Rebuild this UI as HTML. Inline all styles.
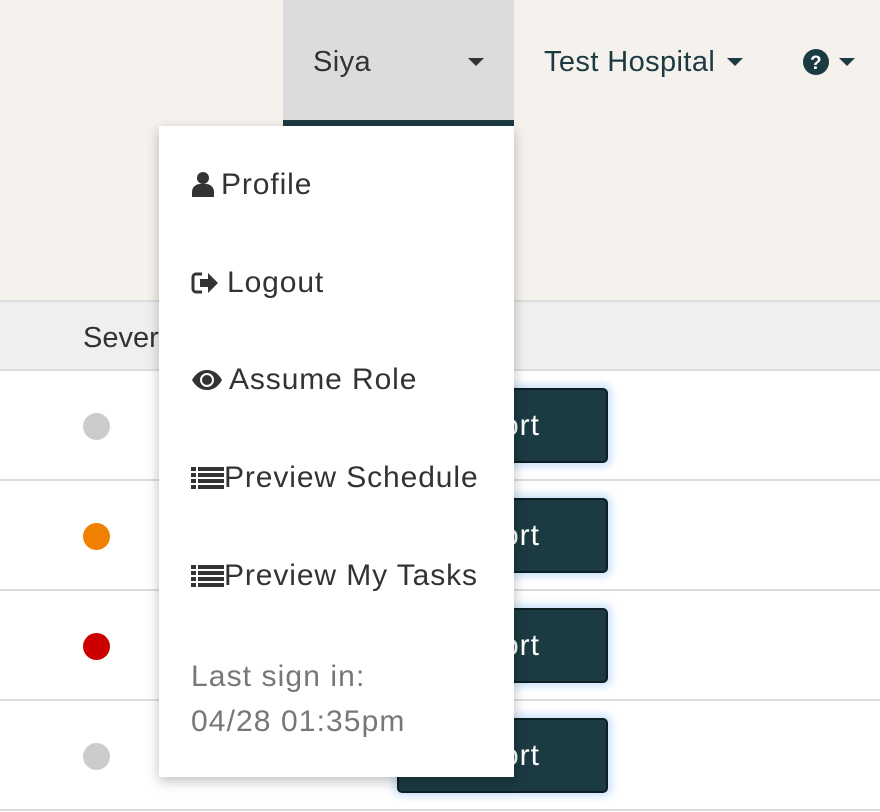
<!DOCTYPE html>
<html><head><meta charset="utf-8"><style>
*{margin:0;padding:0;box-sizing:border-box}
body{width:880px;height:812px;overflow:hidden;background:#fff;font-family:"Liberation Sans","DejaVu Sans",sans-serif;position:relative}
.top{position:absolute;left:0;top:0;width:880px;height:300px;background:#f5f2ee}
.nav{position:absolute;top:0;height:126px;font-size:29px;letter-spacing:0.4px;color:#1b3a41;line-height:124px}
.siya{left:283px;width:231px;background:#dcdcdc;border-bottom:6px solid #1b3a41;color:#333;padding-left:30px}
.caret{position:absolute;width:0;height:0;border-left:8px solid transparent;border-right:8px solid transparent;border-top:8px solid #333;top:58px}
.th{position:absolute;left:0;top:300px;width:880px;height:71px;background:#efefef;border-top:2px solid #ddd;border-bottom:2px solid #ddd;font-size:29px;color:#333;padding-left:83px;line-height:72px}
.row{position:absolute;left:0;width:880px;height:110px;border-bottom:2px solid #ddd}
.dot{position:absolute;left:83px;width:27px;height:27px;border-radius:50%}
.btn{position:absolute;left:397px;width:211px;height:75px;background:#1b3a41;border:2px solid #0d1f23;border-radius:5px;box-shadow:0 0 8px 4px #cde3fb;color:#fff;font-size:30px;letter-spacing:1px;line-height:72px;padding-left:103px}
.menu{position:absolute;left:159px;top:126px;width:355px;height:651px;background:#fff;box-shadow:0 4px 12px rgba(0,0,0,.25);font-size:30px;letter-spacing:0.9px;color:#333}
.it{position:absolute;left:32px;display:flex;align-items:center;gap:6px}
.last{position:absolute;left:32px;top:528px;color:#777;font-size:30px;letter-spacing:1.1px;line-height:45px}
</style></head><body>
<div class="top"></div>
<div class="nav siya">Siya<span class="caret" style="left:185px"></span></div>
<div class="nav" style="left:544px;width:210px">Test Hospital<span class="caret" style="left:183px;border-top-color:#1b3a41"></span></div>
<div class="nav" style="left:803px;width:60px">
<svg style="position:absolute;left:0;top:49px" width="26" height="26" viewBox="0 0 26 26"><circle cx="13" cy="13" r="13" fill="#1b3a41"/><text x="13" y="20" text-anchor="middle" font-size="19" font-weight="bold" fill="#fff" font-family="Liberation Sans">?</text></svg>
<span class="caret" style="left:36px;border-top-color:#1b3a41"></span></div>
<div class="th">Severity</div>
<div class="row" style="top:371px"><div class="dot" style="top:42px;background:#ccc"></div><div class="btn" style="top:17px">ort</div></div>
<div class="row" style="top:481px"><div class="dot" style="top:42px;background:#f08000"></div><div class="btn" style="top:17px">ort</div></div>
<div class="row" style="top:591px"><div class="dot" style="top:42px;background:#cc0000"></div><div class="btn" style="top:17px">ort</div></div>
<div class="row" style="top:701px"><div class="dot" style="top:42px;background:#ccc"></div><div class="btn" style="top:17px">ort</div></div>
<div class="menu">
<div class="it" style="top:42px"><svg width="24" height="28" viewBox="0 0 24 28"><circle cx="12" cy="7" r="6" fill="#333"/><path d="M1 26v-5c0-5 4-8 8-8h6c4 0 8 3 8 8v5z" fill="#333"/></svg>Profile</div>
<div class="it" style="top:140px"><svg width="30" height="24" viewBox="0 0 30 24"><path d="M11 3H5a3 3 0 0 0-3 3v12a3 3 0 0 0 3 3h6" fill="none" stroke="#333" stroke-width="3"/><path d="M9 8h8V2l10 10-10 10v-6H9z" fill="#333"/></svg>Logout</div>
<div class="it" style="top:237px"><svg width="32" height="22" viewBox="0 0 32 22"><path d="M1 11C5 4 10 1 16 1s11 3 15 10c-4 7-9 10-15 10S5 18 1 11z" fill="#333"/><circle cx="16" cy="11" r="7" fill="#fff"/><circle cx="16" cy="11" r="5" fill="#333"/></svg>Assume Role</div>
<div class="it" style="top:335px;gap:0"><svg width="33" height="24" viewBox="0 0 33 24"><g fill="#333"><rect x="0" y="1" width="5" height="4"/><rect x="7" y="1" width="26" height="4"/><rect x="0" y="7" width="5" height="4"/><rect x="7" y="7" width="26" height="4"/><rect x="0" y="13" width="5" height="4"/><rect x="7" y="13" width="26" height="4"/><rect x="0" y="19" width="5" height="4"/><rect x="7" y="19" width="26" height="4"/></g></svg>Preview Schedule</div>
<div class="it" style="top:433px;gap:0"><svg width="33" height="24" viewBox="0 0 33 24"><g fill="#333"><rect x="0" y="1" width="5" height="4"/><rect x="7" y="1" width="26" height="4"/><rect x="0" y="7" width="5" height="4"/><rect x="7" y="7" width="26" height="4"/><rect x="0" y="13" width="5" height="4"/><rect x="7" y="13" width="26" height="4"/><rect x="0" y="19" width="5" height="4"/><rect x="7" y="19" width="26" height="4"/></g></svg>Preview My Tasks</div>
<div class="last">Last sign in:<br>04/28 01:35pm</div>
</div>
</body></html>
